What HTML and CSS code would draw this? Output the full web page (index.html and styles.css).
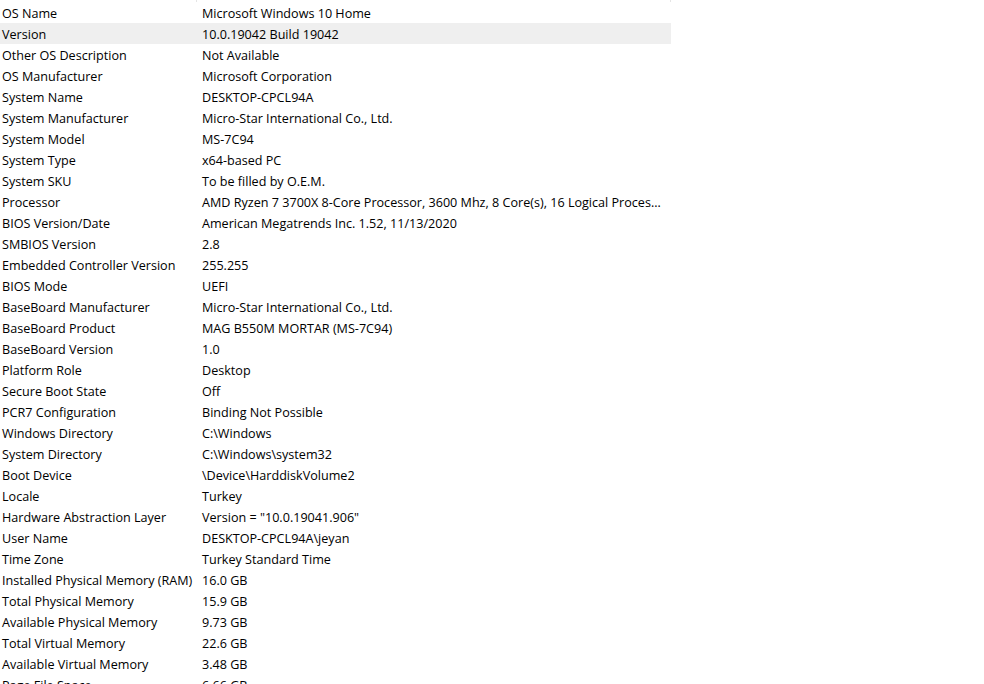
FILE: index.html
```html
<!DOCTYPE html>
<html>
<head>
<meta charset="utf-8">
<link rel="stylesheet" href="styles.css">
</head>
<body>
<div class="list">
  <div class="header"><div class="hcol1"></div><div class="hcol2"></div></div>
  <div class="row"><div class="k">OS Name</div><div class="v">Microsoft Windows 10 Home</div></div>
  <div class="row sel"><div class="k">Version</div><div class="v">10.0.19042 Build 19042</div></div>
  <div class="row"><div class="k">Other OS Description</div><div class="v">Not Available</div></div>
  <div class="row"><div class="k">OS Manufacturer</div><div class="v">Microsoft Corporation</div></div>
  <div class="row"><div class="k">System Name</div><div class="v">DESKTOP-CPCL94A</div></div>
  <div class="row"><div class="k">System Manufacturer</div><div class="v">Micro-Star International Co., Ltd.</div></div>
  <div class="row"><div class="k">System Model</div><div class="v">MS-7C94</div></div>
  <div class="row"><div class="k">System Type</div><div class="v">x64-based PC</div></div>
  <div class="row"><div class="k">System SKU</div><div class="v">To be filled by O.E.M.</div></div>
  <div class="row"><div class="k">Processor</div><div class="v">AMD Ryzen 7 3700X 8-Core Processor, 3600 Mhz, 8 Core(s), 16 Logical Processor(s)</div></div>
  <div class="row"><div class="k">BIOS Version/Date</div><div class="v">American Megatrends Inc. 1.52, 11/13/2020</div></div>
  <div class="row"><div class="k">SMBIOS Version</div><div class="v">2.8</div></div>
  <div class="row"><div class="k">Embedded Controller Version</div><div class="v">255.255</div></div>
  <div class="row"><div class="k">BIOS Mode</div><div class="v">UEFI</div></div>
  <div class="row"><div class="k">BaseBoard Manufacturer</div><div class="v">Micro-Star International Co., Ltd.</div></div>
  <div class="row"><div class="k">BaseBoard Product</div><div class="v">MAG B550M MORTAR (MS-7C94)</div></div>
  <div class="row"><div class="k">BaseBoard Version</div><div class="v">1.0</div></div>
  <div class="row"><div class="k">Platform Role</div><div class="v">Desktop</div></div>
  <div class="row"><div class="k">Secure Boot State</div><div class="v">Off</div></div>
  <div class="row"><div class="k">PCR7 Configuration</div><div class="v">Binding Not Possible</div></div>
  <div class="row"><div class="k">Windows Directory</div><div class="v">C:\Windows</div></div>
  <div class="row"><div class="k">System Directory</div><div class="v">C:\Windows\system32</div></div>
  <div class="row"><div class="k">Boot Device</div><div class="v">\Device\HarddiskVolume2</div></div>
  <div class="row"><div class="k">Locale</div><div class="v">Turkey</div></div>
  <div class="row"><div class="k">Hardware Abstraction Layer</div><div class="v">Version = "10.0.19041.906"</div></div>
  <div class="row"><div class="k">User Name</div><div class="v">DESKTOP-CPCL94A\jeyan</div></div>
  <div class="row"><div class="k">Time Zone</div><div class="v">Turkey Standard Time</div></div>
  <div class="row"><div class="k">Installed Physical Memory (RAM)</div><div class="v">16.0 GB</div></div>
  <div class="row"><div class="k">Total Physical Memory</div><div class="v">15.9 GB</div></div>
  <div class="row"><div class="k">Available Physical Memory</div><div class="v">9.73 GB</div></div>
  <div class="row"><div class="k">Total Virtual Memory</div><div class="v">22.6 GB</div></div>
  <div class="row"><div class="k">Available Virtual Memory</div><div class="v">3.48 GB</div></div>
  <div class="row"><div class="k">Page File Space</div><div class="v">6.66 GB</div></div>
</div>
</body>
</html>
```
FILE: styles.css
```css
html, body {
  margin: 0;
  padding: 0;
  height: 684px;
  overflow: hidden;
  background: #ffffff;
}
body {
  font-family: "Open Sans", "Noto Sans", sans-serif;
  font-size: 12.6px;
  color: #000000;
}
.list {
  width: 671px;
}
.header {
  display: flex;
  height: 2px;
}
.hcol1 {
  width: 196px;
  border-right: 1px solid #e5e5e5;
}
.hcol2 {
  width: 473px;
  border-right: 1px solid #e5e5e5;
}
.row {
  display: grid;
  grid-template-columns: 200px 471px;
  height: 21px;
  box-sizing: border-box;
  padding-top: 2px;
  line-height: 19px;
}
.row.sel {
  background: #efefef;
}
.k {
  padding-left: 2px;
  white-space: nowrap;
  overflow: hidden;
}
.v {
  padding-left: 2px;
  padding-right: 8px;
  white-space: nowrap;
  overflow: hidden;
  text-overflow: ellipsis;
}
```
